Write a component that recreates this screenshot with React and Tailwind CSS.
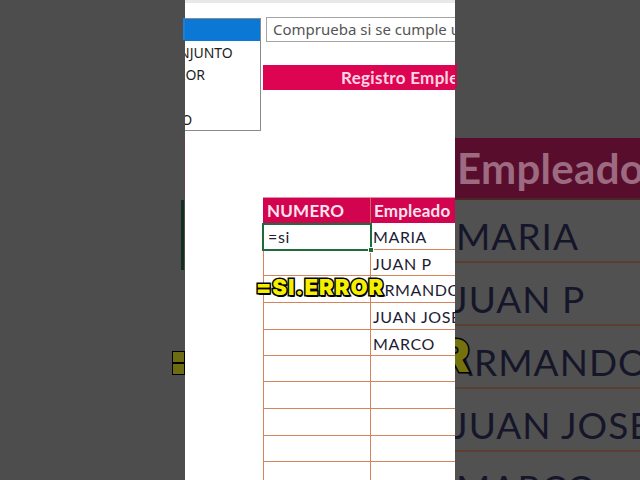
import React from "react";

const rowH = [27, 26, 27, 27, 26, 26, 27, 27, 26, 27];
const names = ["=si", "", "", "", "", "", "", "", "", ""];
const emps = ["MARIA", "JUAN P", "ARMANDO", "JUAN JOSE", "MARCO", "", "", "", "", ""];

function LeftBg() {
  return (
    <div className="w-[185px] h-full shrink-0 flex flex-col items-end">
      <div className="mt-[18px] h-[22px] w-[2px] bg-[#1f7fd6]" />
      <div className="mt-[100px] h-[55px] w-[1px] bg-[#6d3a4f]" />
      <div className="mt-[5px] mr-[1px] h-[70px] w-[3px] bg-[#12301d]" />
      <div className="mt-[81px] h-[24px] w-[13px] border border-black bg-[#6e6c12] flex flex-col justify-center">
        <div className="h-[2px] bg-black" />
      </div>
    </div>
  );
}

function RightBg() {
  const rows = ["MARIA", "JUAN P", "ARMANDO", "JUAN JOSE", "MARCO"];
  return (
    <div className="w-[185px] h-full shrink-0 flex flex-col overflow-hidden font-['Lato',sans-serif]">
      <div className="h-[138px] shrink-0 flex flex-col">
        <div className="mt-[63px] h-[25px] w-[2px] bg-[#b80f48]" />
      </div>
      <div className="h-[62px] shrink-0 bg-[#580d2d] border-b-2 border-[#4a2820] flex items-center pl-[2px]">
        <span className="text-[42px] font-bold text-[#9c6a81] leading-none tracking-[0.3px] whitespace-nowrap">Empleado</span>
      </div>
      {rows.map((r, i) => (
        <div
          key={i}
          className="relative h-[63px] shrink-0 bg-[#515151] border-b-2 border-[#5a3f30] flex items-center pt-[10px]"
        >
          <span
            className={
              "text-[37px] leading-none text-[#16162a] tracking-[1px] whitespace-nowrap " +
              (r.startsWith("J") ? "-ml-[3px]" : r === "ARMANDO" ? "-ml-[7px]" : "ml-[1px]")
            }
          >
            {r}
          </span>
          {i === 2 && (
            <span className="absolute left-[-16px] top-[-2px] text-[46px] font-black font-['Inter',sans-serif] text-[#74720f] [-webkit-text-stroke:3px_#000] [paint-order:stroke_fill] leading-[63px]">
              R
            </span>
          )}
        </div>
      ))}
    </div>
  );
}

function Center() {
  return (
    <div className="relative w-[270px] h-[480px] shrink-0 bg-white overflow-hidden">
      <div className="h-[3px] bg-[#e8e8e8]" />
      <div className="pl-[78px] pt-[62px]">
        <div className="h-[25px] w-[210px] bg-[#dd0551] flex items-center pl-[78px] font-['Lato',sans-serif] font-bold text-[17px] text-[#ffd5e6] whitespace-nowrap tracking-[0.3px]">
          Registro Empleados
        </div>
      </div>
      <div className="pl-[78px] mt-[107px]">
        <div className="relative w-[230px] font-['Lato',sans-serif] text-[16px] tracking-[0.6px]">
          <div className="flex h-[26px] bg-[#d2044f] border-t border-[#e98aa8]">
            <div className="w-[108px] border-r border-[#c86a5a] pl-[4px] flex items-center font-bold text-[17px] tracking-[0.2px] text-[#ffe2ee]">
              NUMERO
            </div>
            <div className="w-[122px] pl-[3px] flex items-center font-bold text-[17px] tracking-[0.2px] text-[#ffe2ee]">
              Empleado
            </div>
          </div>
          {rowH.map((h, i) => (
            <div key={i} className="flex" style={{ height: h }}>
              <div className="w-[108px] border-l border-r border-b border-[#d4845a] pl-[4px] pt-[2px] flex items-center text-[#202030]">
                {names[i]}
              </div>
              <div className="w-[122px] border-b border-[#d4845a] pl-[2px] pt-[2px] flex items-center text-[#1c1c34] whitespace-nowrap">
                {emps[i]}
              </div>
            </div>
          ))}
          <div className="absolute left-[-1px] top-[26px] w-[110px] h-[28px] border-2 border-[#1f6b3c]">
            <div className="absolute right-[-4px] bottom-[-4px] w-[6px] h-[6px] bg-[#1f6b3c] border border-white" />
          </div>
        </div>
      </div>

      {/* autocomplete dropdown */}
      <div className="absolute left-[-48px] top-[18px] w-[124px] h-[113px] bg-white border border-[#8a8a8a] font-['Noto_Sans',sans-serif] text-[14px] text-[#1e1e1e]">
        {["SI", "SI.CONJUNTO", "SI.ERROR", "SI.ND", "SIGNO"].map((t, i) => (
          <div
            key={t}
            className={
              "h-[22.4px] flex items-center whitespace-nowrap " +
              (i === 0 ? "bg-[#0a78d4] text-white pl-[6px]" : i === 4 ? "pl-[10px]" : "pl-[6px]")
            }
          >
            {t}
          </div>
        ))}
      </div>

      {/* tooltip */}
      <div className="absolute left-[81px] top-[17px] w-[240px] h-[25px] bg-white border border-[#a5a5a5] flex items-center pl-[6px] font-['Noto_Sans',sans-serif] text-[15px] text-[#555555] whitespace-nowrap">
        Comprueba si se cumple una condición
      </div>

      {/* caption */}
      <div className="absolute left-[71px] top-[276px] font-['Inter',sans-serif] font-black text-[22px] leading-none text-[#f6f000] [-webkit-text-stroke:3px_#000] [paint-order:stroke_fill] tracking-[1px] [text-shadow:1px_2px_0_#000]">
        =SI.ERROR
      </div>
    </div>
  );
}

export default function App() {
  return (
    <div className="flex w-[640px] h-[480px] overflow-hidden bg-[#4d4d4d]">
      <LeftBg />
      <Center />
      <RightBg />
    </div>
  );
}
